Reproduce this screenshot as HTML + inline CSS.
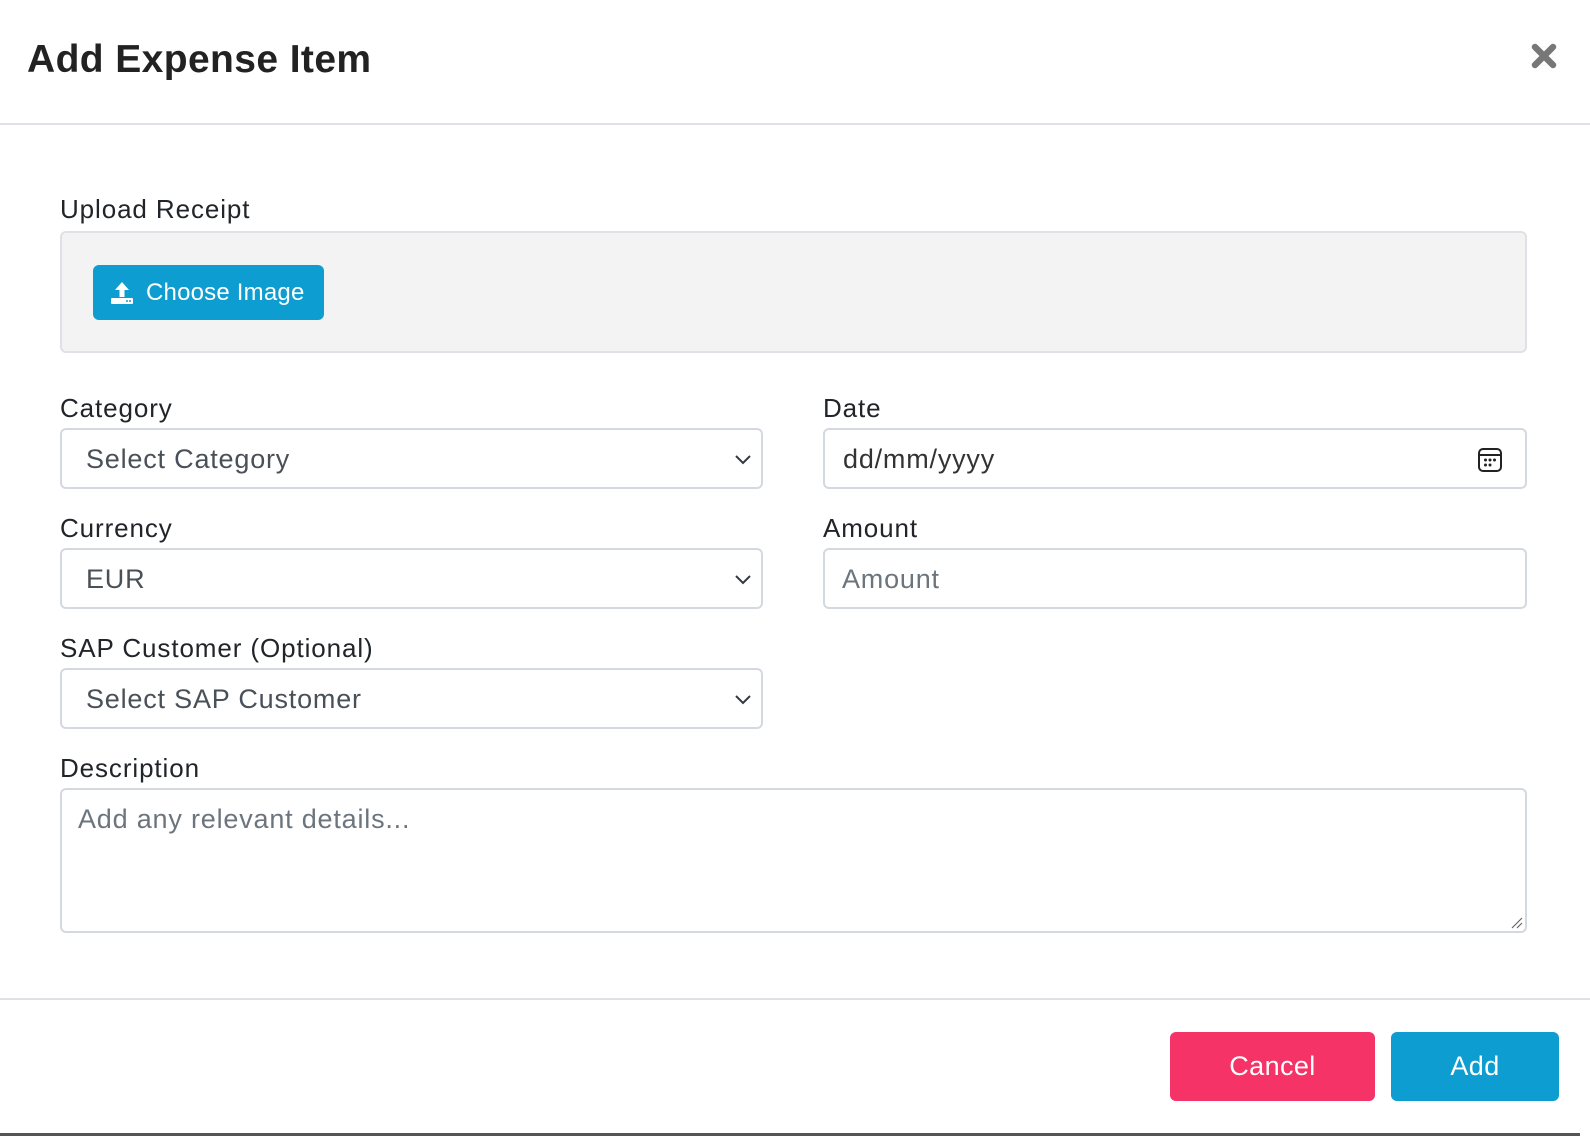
<!DOCTYPE html>
<html><head><meta charset="utf-8"><style>
*{box-sizing:border-box;margin:0;padding:0}
html,body{width:1590px;height:1136px;overflow:hidden;background:#fff;font-family:"Liberation Sans",sans-serif;color:#212529}
.abs{position:absolute}
.title{left:27px;top:38px;font-size:39px;font-weight:bold;color:#222;letter-spacing:0.4px}
.hr{left:0;width:1590px;height:2px;background:#dee2e6}
.lbl{font-size:26px;color:#212529;line-height:1;letter-spacing:0.9px}
.box{border:2px solid #d4d8e0;border-radius:6px;background:#fff}
.txt{font-size:27px;color:#495057;line-height:1;letter-spacing:0.8px}
.ph{color:#6c757d}
.chev{position:absolute;right:8px;top:22px}
.btn{color:#fff;font-size:27px;border-radius:6px;display:flex;align-items:center;justify-content:center;letter-spacing:0.4px}
</style></head><body>
<div class="abs title">Add Expense Item</div>
<svg class="abs" style="left:1531px;top:43px" width="26" height="26" viewBox="0 0 26 26"><path d="M4 4L22 22M22 4L4 22" stroke="#777" stroke-width="6.5" stroke-linecap="round"/></svg>
<div class="abs hr" style="top:123px"></div>

<div class="abs lbl" style="left:60px;top:196px">Upload Receipt</div>
<div class="abs" style="left:60px;top:231px;width:1467px;height:122px;background:#f3f3f3;border:2px solid #dee2e6;border-radius:6px"></div>
<div class="abs btn" style="left:93px;top:265px;width:231px;height:55px;background:#0d9dd0;font-size:24px;justify-content:flex-start;padding-left:17px;letter-spacing:0.2px">
<svg width="24" height="24" viewBox="0 0 24 24" style="margin-right:12px"><path d="M12 1L5 9h4.5v7h5V9H19z" fill="#fff"/><rect x="1" y="17" width="22" height="6" rx="1" fill="#fff"/><circle cx="17" cy="20" r="1" fill="#0d9dd0"/><circle cx="20" cy="20" r="1" fill="#0d9dd0"/></svg>Choose Image</div>

<div class="abs lbl" style="left:60px;top:395px">Category</div>
<div class="abs box" style="left:60px;top:428px;width:703px;height:61px"><div class="abs txt" style="left:24px;top:16px">Select Category</div><svg class="chev" width="20" height="14" viewBox="0 0 20 14"><path d="M3 4l7 7 7-7" stroke="#343a40" stroke-width="2" fill="none"/></svg></div>

<div class="abs lbl" style="left:823px;top:395px">Date</div>
<div class="abs box" style="left:823px;top:428px;width:704px;height:61px"><div class="abs txt" style="left:18px;top:16px;color:#333">dd/mm/yyyy</div>
<svg class="abs" style="left:652px;top:17px" width="26" height="26" viewBox="0 0 26 26"><rect x="2" y="2" width="22" height="22" rx="4" fill="none" stroke="#222" stroke-width="2"/><line x1="2" y1="8" x2="24" y2="8" stroke="#222" stroke-width="2"/><g fill="#222"><circle cx="8.5" cy="13" r="1.5"/><circle cx="13" cy="13" r="1.5"/><circle cx="17.5" cy="13" r="1.5"/><circle cx="8.5" cy="18" r="1.5"/><circle cx="13" cy="18" r="1.5"/></g></svg></div>

<div class="abs lbl" style="left:60px;top:515px">Currency</div>
<div class="abs box" style="left:60px;top:548px;width:703px;height:61px"><div class="abs txt" style="left:24px;top:16px">EUR</div><svg class="chev" width="20" height="14" viewBox="0 0 20 14"><path d="M3 4l7 7 7-7" stroke="#343a40" stroke-width="2" fill="none"/></svg></div>

<div class="abs lbl" style="left:823px;top:515px">Amount</div>
<div class="abs box" style="left:823px;top:548px;width:704px;height:61px"><div class="abs txt ph" style="left:17px;top:16px">Amount</div></div>

<div class="abs lbl" style="left:60px;top:635px">SAP Customer (Optional)</div>
<div class="abs box" style="left:60px;top:668px;width:703px;height:61px"><div class="abs txt" style="left:24px;top:16px">Select SAP Customer</div><svg class="chev" width="20" height="14" viewBox="0 0 20 14"><path d="M3 4l7 7 7-7" stroke="#343a40" stroke-width="2" fill="none"/></svg></div>

<div class="abs lbl" style="left:60px;top:755px">Description</div>
<div class="abs box" style="left:60px;top:788px;width:1467px;height:145px"><div class="abs txt ph" style="left:16px;top:16px">Add any relevant details...</div>
<svg class="abs" style="right:2px;bottom:2px" width="14" height="14" viewBox="0 0 14 14"><path d="M13 3L3 13M13 8L8 13" stroke="#666" stroke-width="1.2"/></svg></div>

<div class="abs hr" style="top:998px"></div>
<div class="abs btn" style="left:1170px;top:1032px;width:205px;height:69px;background:#f53366">Cancel</div>
<div class="abs btn" style="left:1391px;top:1032px;width:168px;height:69px;background:#0d9dd0">Add</div>
<div class="abs" style="left:0;top:1133px;width:1580px;height:3px;background:#555"></div>
</body></html>
